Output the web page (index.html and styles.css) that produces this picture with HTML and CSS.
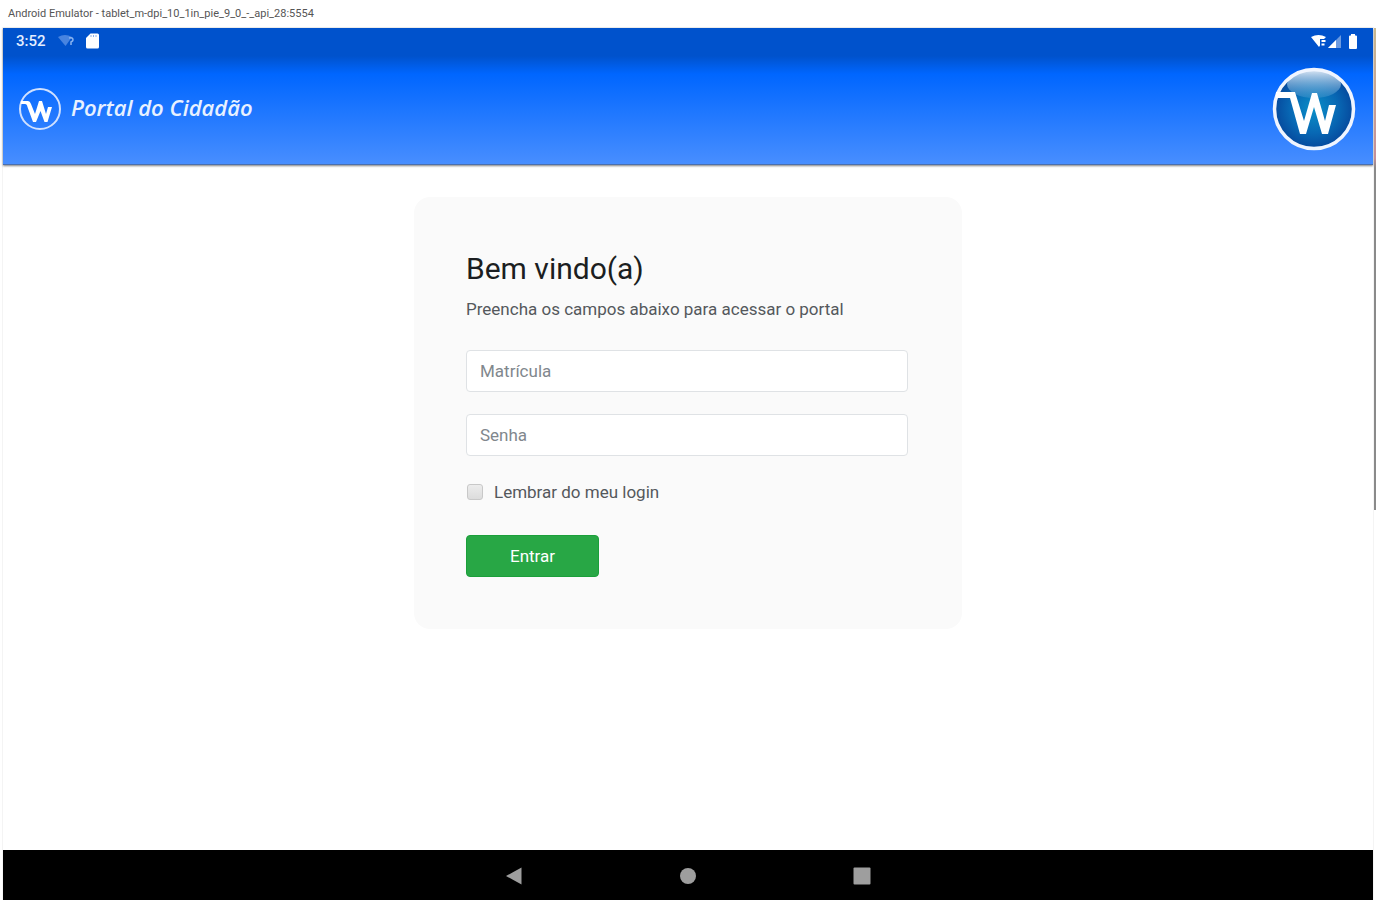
FILE: index.html
```
<!DOCTYPE html>
<html lang="pt-BR">
<head>
    <meta charset="UTF-8">
    <meta name="viewport" content="width=device-width, initial-scale=1.0">
    <title>Portal do Cidadão</title>
    <link rel="stylesheet" href="styles.css">
</head>
<body>
    <div class="window-title">Android Emulator - tablet_m-dpi_10_1in_pie_9_0_-_api_28:5554</div>

    <div class="device">
        <header class="app-header">
            <div class="status-bar">
                <div class="status-group">
                    <span class="clock">3:52</span>
                    <svg width="16" height="14" viewBox="0 0 16 14">
                        <path d="M0 3 Q7 -1 14 3 L7.500 12 Z" fill="#4884e0"/>
                        <path d="M11 4 q4 -1 4 2 q0 1 -2 2 v3" fill="none" stroke="#8ab4f0" stroke-width="1.500"/>
                    </svg>
                    <svg width="14" height="16" viewBox="0 0 14 16">
                        <path d="M4.500 0.500 H11.500 Q13 0.500 13 2 V14 Q13 15.500 11.500 15.500 H1.500 Q0 15.500 0 14 V5 Z" fill="#fff"/>
                        <path d="M5 2 v2 M7.500 2 v2 M10 2 v2" stroke="#8ab0ea" stroke-width="1"/>
                    </svg>
                </div>
                <div class="status-group status-right">
                    <svg width="15" height="14" viewBox="0 0 15 14">
                        <path d="M0 3 Q7.500 -1 15 3 L13 5 H9 V11.500 L8 13 Z" fill="#fff"/>
                        <path d="M10.500 7 h4 M10.500 10.500 h3" stroke="#fff" stroke-width="2"/>
                    </svg>
                    <svg width="13" height="14" viewBox="0 0 13 14">
                        <path d="M13 1 V14 H0 Z" fill="#6c9ae0"/>
                        <path d="M8 6 V14 H0 Z" fill="#fff"/>
                    </svg>
                    <svg class="battery" width="8" height="15" viewBox="0 0 8 15">
                        <path d="M2 0 H6 V1.500 H7 Q8 1.500 8 2.500 V14 Q8 15 7 15 H1 Q0 15 0 14 V2.500 Q0 1.500 1 1.500 H2 Z" fill="#fff"/>
                    </svg>
                </div>
            </div>

            <div class="brand-bar">
                <div class="brand">
                    <svg width="44" height="44" viewBox="0 0 44 44">
                        <circle cx="22" cy="22" r="20" fill="none" stroke="#cfe0ff" stroke-width="2"/>
                        <path d="M3 14 H10 Q12 14 13 17 L17 27 L21 14 H24 L28 27 L30 20 H34 L29.500 35 H26.500 L22.500 24 L18 35 H15 L9.500 20 Q9 17 7 17 H3 Z" fill="#fff"/>
                    </svg>
                    <span class="brand-name">Portal do Cidadão</span>
                </div>
                <svg width="84" height="84" viewBox="0 0 84 84">
                    <defs>
                        <radialGradient id="ball" cx="0.5" cy="0.5" r="0.5">
                            <stop offset="0" stop-color="#0a90c8"/>
                            <stop offset="0.6" stop-color="#0868b4"/>
                            <stop offset="1" stop-color="#06489c"/>
                        </radialGradient>
                        <linearGradient id="shine" x1="0" y1="0" x2="0" y2="1">
                            <stop offset="0" stop-color="#e4edf8" stop-opacity="0.95"/>
                            <stop offset="1" stop-color="#5fa6d6" stop-opacity="0.3"/>
                        </linearGradient>
                    </defs>
                    <circle cx="42" cy="42" r="40" fill="url(#ball)"/>
                    <ellipse cx="42" cy="17" rx="27" ry="14" fill="url(#shine)"/>
                    <circle cx="42" cy="42" r="39.500" fill="none" stroke="#f0f5ff" stroke-width="3.500"/>
                    <path d="M4 25 H23 L32 54 L40 26 H45 L53 54 L57 38 H64 L56 67 H50 L42 40 L34 67 H28 L18 31 H4 Z" fill="#fff"/>
                </svg>
            </div>
        </header>

        <main class="content">
            <form class="login-card">
                <h1>Bem vindo(a)</h1>
                <p>Preencha os campos abaixo para acessar o portal</p>
                <input type="text" class="form-control" id="matricula" name="matricula" placeholder="Matrícula" aria-label="Matrícula">
                <input type="password" class="form-control" id="senha" name="senha" placeholder="Senha" aria-label="Senha">
                <div class="remember">
                    <input type="checkbox" id="lembrar" name="lembrar">
                    <label for="lembrar">Lembrar do meu login</label>
                </div>
                <button type="button" class="submit-button">Entrar</button>
            </form>
        </main>

        <nav class="nav-bar">
            <button type="button" aria-label="Voltar">
                <svg width="18" height="18" viewBox="0 0 18 18"><path d="M1 9 L16.500 0.500 V17.500 Z" fill="#9e9e9e"/></svg>
            </button>
            <button type="button" aria-label="Início">
                <svg width="18" height="18" viewBox="0 0 18 18"><circle cx="9" cy="9" r="8" fill="#9e9e9e"/></svg>
            </button>
            <button type="button" aria-label="Recentes">
                <svg width="18" height="18" viewBox="0 0 18 18"><rect x="0.500" y="0.500" width="17" height="17" rx="1" fill="#9e9e9e"/></svg>
            </button>
        </nav>
        <div class="window-edge"></div>
    </div>
</body>
</html>
```
FILE: styles.css
```
* {
    box-sizing: border-box;
}

body {
    margin: 0;
    min-height: 100vh;
    display: flex;
    flex-direction: column;
    background: #fff;
    color: #54585c;
    font-family: Roboto, Arial, sans-serif;
    font-size: 17px;
    line-height: 24px;
}

svg {
    display: block;
}

.window-title {
    height: 28px;
    padding: 0 8px;
    font-size: 11px;
    line-height: 28px;
    color: #555;
}

.device {
    position: relative;
    flex: 1;
    display: flex;
    flex-direction: column;
    margin: 0 3px;
    box-shadow: 0 0 0 1px #f4f4f4;
}

.app-header {
    background: linear-gradient(#0052cc 28px, #0066ff 46px, #488eff);
    border-bottom: 1px solid #4a6fae;
    box-shadow: 0 1px 2px rgba(0, 0, 0, 0.5);
}

.status-bar {
    height: 28px;
    padding: 0 16px 2px 13px;
    display: flex;
    justify-content: space-between;
    align-items: center;
    color: #e4eeff;
}

.status-group {
    display: flex;
    align-items: center;
    gap: 12px;
}

.status-right {
    gap: 2px;
}

.battery {
    margin-left: 6px;
}

.clock {
    font-size: 15px;
    font-weight: 500;
}

.brand-bar {
    display: flex;
    justify-content: space-between;
    align-items: center;
    padding: 11px 17px 13px 15px;
}

.brand {
    display: flex;
    align-items: center;
    gap: 9px;
}

.brand-name {
    padding-bottom: 4px;
    font-family: "Open Sans", sans-serif;
    font-size: 22px;
    font-style: italic;
    font-weight: 600;
    color: #e8f1ff;
}

/* login */
.content {
    flex: 1;
    padding: 32px 16px;
}

.login-card {
    width: 100%;
    max-width: 548px;
    margin: 0 auto;
    padding: 52px 54px 52px 52px;
    background: #fafafa;
    border-radius: 16px;
}

.login-card h1 {
    margin: 0 0 8px;
    font-size: 30px;
    font-weight: 400;
    line-height: 40px;
    color: #1b1e21;
}

.login-card p {
    margin: 0 0 29px;
}

.form-control {
    display: block;
    width: 100%;
    height: 42px;
    margin-bottom: 22px;
    padding: 0 13px;
    border: 1px solid #dfe2e5;
    border-radius: 4px;
    background: #fff;
    font: inherit;
    color: #495057;
}

.form-control::placeholder {
    color: #81878d;
    opacity: 1;
}

.remember {
    display: flex;
    align-items: center;
    gap: 10px;
    height: 28px;
    margin-bottom: 29px;
}

.remember input {
    appearance: none;
    width: 16px;
    height: 16px;
    margin: 0 1px;
    border: 1px solid #c8c8c8;
    border-radius: 3px;
    background: linear-gradient(#ececec, #dcdcdc);
}

.remember input:checked {
    background: #28a745;
}

.submit-button {
    display: block;
    width: 133px;
    height: 42px;
    border: 1px solid #1b9f3a;
    border-radius: 4px;
    background: #28a745;
    color: #fff;
    font: inherit;
    cursor: pointer;
}

.submit-button:hover {
    background: #218838;
}

/* android navigation */
.nav-bar {
    display: flex;
    justify-content: center;
    align-items: center;
    gap: 126px;
    height: 50px;
    padding-top: 2px;
    background: #000;
}

.nav-bar button {
    display: flex;
    justify-content: center;
    width: 48px;
    padding: 0;
    border: none;
    background: none;
    cursor: pointer;
}

/* edge of the window behind the emulator */
.window-edge {
    position: absolute;
    top: 0;
    right: -3px;
    width: 2px;
    height: 482px;
    background: linear-gradient(#c9b98f, #c58f98 130px, #8a8a8a 140px);
}
```
